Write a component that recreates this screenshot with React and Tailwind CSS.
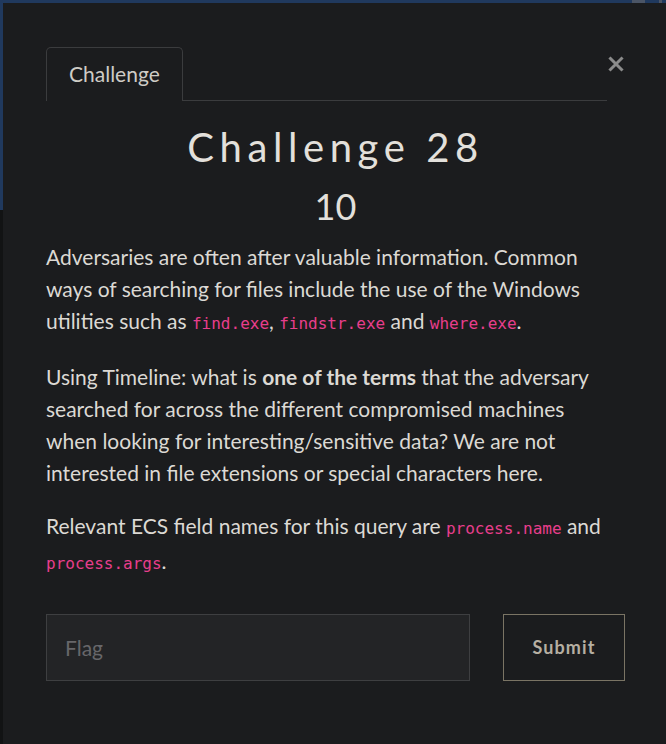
import React from "react";

const Code = ({ children }) => (
  <code className="font-['DejaVu_Sans_Mono',monospace] text-[16px] text-[#e83e8c]">
    {children}
  </code>
);

const ChallengeModal = () => {
  return (
    <div className="flex-1 bg-[#1b1c1e] pl-[43px] pt-[44px] font-['Lato',sans-serif] text-[#dcd9d4]">
      <div className="w-[579px]">
        {/* Header with tab + close */}
        <div className="flex items-start">
          <div className="flex-1 border-b border-[#3b3c3e]">
            <div className="mb-[-1px] inline-block rounded-t-[5px] border border-b-0 border-[#3b3c3e] bg-[#1b1c1e] px-[22px] pt-[13px] pb-[14px] text-[21px] leading-[26px] text-[#cfccc6]">
              Challenge
            </div>
          </div>
          <button className="mt-[7px] mr-[1px] flex h-[20px] w-[17px] items-center justify-end text-[#8b8b8b]">
            <svg width="16" height="16" viewBox="0 0 16 16">
              <path
                d="M2.5 2.5 L13.5 13.5 M13.5 2.5 L2.5 13.5"
                stroke="currentColor"
                strokeWidth="3"
                strokeLinecap="square"
              />
            </svg>
          </button>
        </div>

        {/* Title */}
        <div className="mt-[22px] text-center">
          <h2 className="text-[40px] leading-[48px] tracking-[0.14em] text-[#e3e0db]">
            Challenge 28
          </h2>
          <h3 className="mt-[14px] text-[36px] leading-[43px] text-[#e3e0db]">
            10
          </h3>
        </div>

        {/* Description */}
        <div className="mt-[13px] w-[572px] text-[21px] leading-[32px]">
          <p className="mb-[21px]">
            Adversaries are often after valuable information. Common ways of
            searching for files include the use of the Windows utilities such
            as <Code>find.exe</Code>, <Code>findstr.exe</Code> and{" "}
            <Code>where.exe</Code>.
          </p>
          <p className="mb-[21px]">
            Using Timeline: what is <strong className="font-bold">one of the terms</strong>{" "}
            that the adversary searched for across the different compromised
            machines when looking for interesting/sensitive data? We are not
            interested in file extensions or special characters here.
          </p>
          <p>
            Relevant ECS field names for this query are{" "}
            <Code>process.name</Code> and <Code>process.args</Code>.
          </p>
        </div>

        {/* Flag form */}
        <div className="mt-[34px] flex gap-[33px]">
          <input
            type="text"
            placeholder="Flag"
            className="h-[67px] flex-1 border border-[#3e3f41] bg-[#232426] px-[18px] text-[21px] text-[#dcd9d4] placeholder:text-[#67676a] outline-none"
          />
          <button className="h-[67px] w-[122px] border border-[#7a7464] text-[18px] font-bold tracking-[0.06em] text-[#b6afa2]">
            Submit
          </button>
        </div>
      </div>
    </div>
  );
};

export default function App() {
  return (
    <div className="flex h-[744px] w-[666px] flex-col overflow-hidden bg-[#121314]">
      {/* backdrop strip */}
      <div className="flex h-[3px] bg-[#20395e]">
        <div className="w-[632px]" />
        <div className="w-[13px] bg-[#4b5566]" />
        <div className="w-[14px]" />
        <div className="w-[3px] bg-[#4b5566]" />
      </div>
      <div className="flex flex-1">
        <div className="flex w-[3px] flex-col">
          <div className="h-[207px] bg-[#20395e]" />
          <div className="flex-1 bg-[#121314]" />
        </div>
        <ChallengeModal />
      </div>
    </div>
  );
}
